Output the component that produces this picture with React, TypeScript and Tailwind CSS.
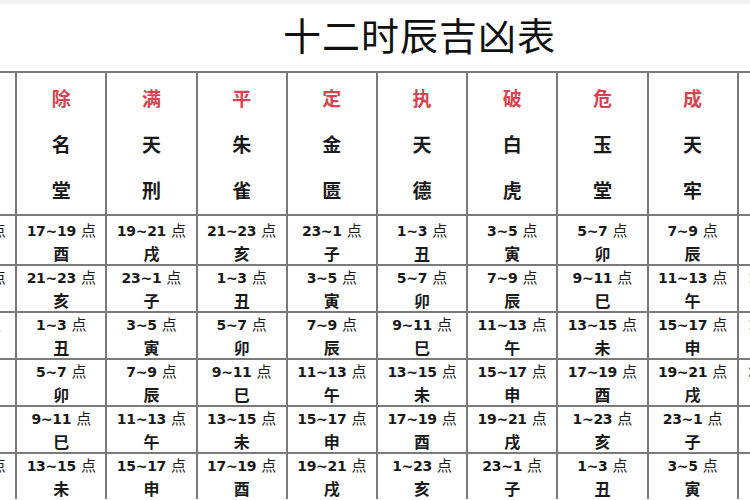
import React from 'react';

type Column = {
  key: string;
  gods: [string, string];
  slots: [string, string][];
};

const columns: Column[] = [
  { key: '建', gods: ['青', '龙'], slots: [['15~17', '申'], ['19~21', '戌'], ['23~1', '子'], ['3~5', '寅'], ['7~9', '辰'], ['11~13', '午']] },
  { key: '除', gods: ['名', '堂'], slots: [['17~19', '酉'], ['21~23', '亥'], ['1~3', '丑'], ['5~7', '卯'], ['9~11', '巳'], ['13~15', '未']] },
  { key: '满', gods: ['天', '刑'], slots: [['19~21', '戌'], ['23~1', '子'], ['3~5', '寅'], ['7~9', '辰'], ['11~13', '午'], ['15~17', '申']] },
  { key: '平', gods: ['朱', '雀'], slots: [['21~23', '亥'], ['1~3', '丑'], ['5~7', '卯'], ['9~11', '巳'], ['13~15', '未'], ['17~19', '酉']] },
  { key: '定', gods: ['金', '匮'], slots: [['23~1', '子'], ['3~5', '寅'], ['7~9', '辰'], ['11~13', '午'], ['15~17', '申'], ['19~21', '戌']] },
  { key: '执', gods: ['天', '德'], slots: [['1~3', '丑'], ['5~7', '卯'], ['9~11', '巳'], ['13~15', '未'], ['17~19', '酉'], ['1~23', '亥']] },
  { key: '破', gods: ['白', '虎'], slots: [['3~5', '寅'], ['7~9', '辰'], ['11~13', '午'], ['15~17', '申'], ['19~21', '戌'], ['23~1', '子']] },
  { key: '危', gods: ['玉', '堂'], slots: [['5~7', '卯'], ['9~11', '巳'], ['13~15', '未'], ['17~19', '酉'], ['1~23', '亥'], ['1~3', '丑']] },
  { key: '成', gods: ['天', '牢'], slots: [['7~9', '辰'], ['11~13', '午'], ['15~17', '申'], ['19~21', '戌'], ['23~1', '子'], ['3~5', '寅']] },
  { key: '收', gods: ['玄', '武'], slots: [['9~11', '巳'], ['13~15', '未'], ['17~19', '酉'], ['21~23', '亥'], ['1~3', '丑'], ['5~7', '卯']] },
];

const rowHeights = ['h-[50px] pt-[3px]', 'h-[47px]', 'h-[47px]', 'h-[47px]', 'h-[47px]', 'h-[47px]'];

export default function App() {
  return (
    <div
      className="w-[750px] h-[500px] overflow-hidden bg-white text-[#1a1a1a]"
      style={{ fontFamily: '"Noto Sans CJK SC", "Noto Sans", sans-serif' }}
    >
      {/* faint strip at top */}
      <div className="h-[4px] bg-[#f1f1f1]"></div>

      {/* Title */}
      <div className="h-[67px] pl-[283px] pt-[8px]">
        <h1 className="text-[38px] leading-[44px] font-normal tracking-[1px] text-[#111]">十二时辰吉凶表</h1>
      </div>

      {/* Table */}
      <div className="ml-[-75px] grid grid-cols-[repeat(10,90.2px)] w-max border-t-2 border-[#7a7a7a]">
        {columns.map((col) => (
          <div key={col.key} className="border-l-2 border-[#7a7a7a]">
            {/* header cell */}
            <div className="h-[141px] pt-[2px] flex flex-col items-center text-[19px] leading-[46px] font-bold">
              <span className="text-[#d8434f]">{col.key}</span>
              <span>{col.gods[0]}</span>
              <span>{col.gods[1]}</span>
            </div>
            {col.slots.map(([hours, branch], i) => (
              <div
                key={i}
                className={`${rowHeights[i]} border-t-2 border-[#7a7a7a] flex flex-col items-center leading-[22px] font-bold`}
              >
                <span className="whitespace-nowrap text-[14px]">
                  <span className="font-['DejaVu_Sans'] tracking-[-0.3px]">{hours}</span>
                  <span className="ml-[5px] text-[15px] font-normal">点</span>
                </span>
                <span className="text-[16px]">{branch}</span>
              </div>
            ))}
          </div>
        ))}
      </div>
    </div>
  );
}
